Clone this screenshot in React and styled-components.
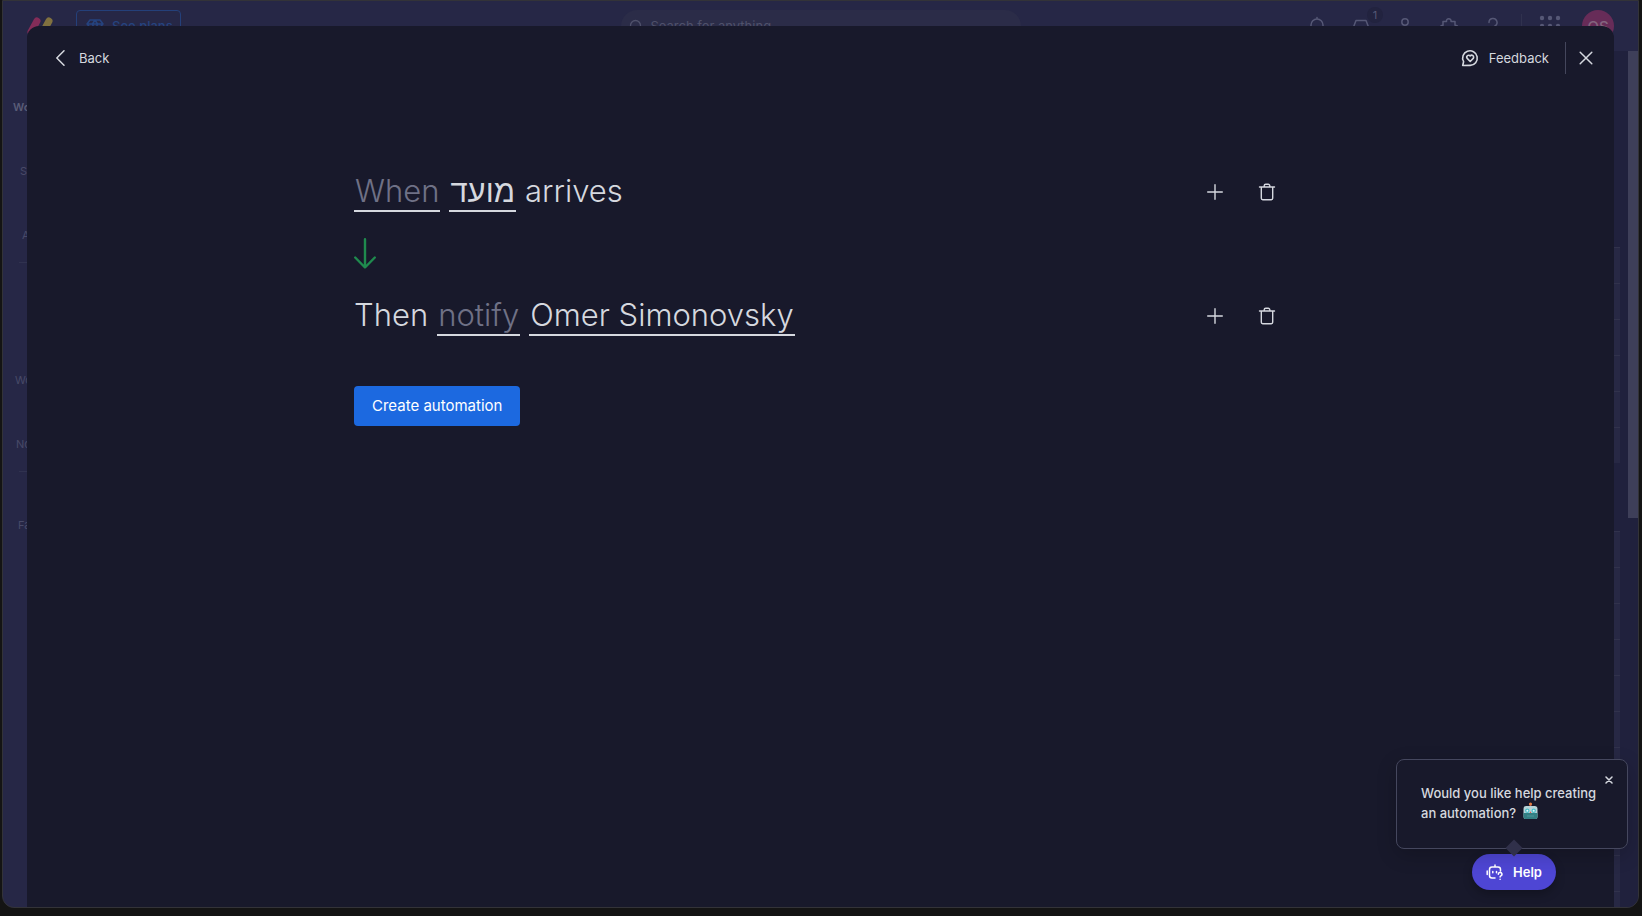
import React from "react";
import styled, { createGlobalStyle } from "styled-components";

const Global = createGlobalStyle`
  *, *::before, *::after { box-sizing: border-box; }
  html, body, #root { height: 100%; }
  body {
    margin: 0;
    background: #141414;
    font-family: Inter, "Liberation Sans", sans-serif;
    font-size: 13px;
    color: #d5d8df;
    overflow: hidden;
  }
  button { font: inherit; color: inherit; cursor: pointer; }
`;

const Desktop = styled.div`
  height: 100%;
  padding: 0 3px 8px 2px;
`;

const Window = styled.div`
  position: relative;
  display: flex;
  flex-direction: column;
  height: 100%;
  overflow: hidden;
  border: 1px solid #333338;
  border-radius: 0 0 12px 12px;
  background: #262746;
`;

const TopBar = styled.header`
  display: grid;
  grid-template-columns: 1fr 400px 1fr;
  align-items: center;
  flex: none;
  height: 50px;
  padding: 0 24px;
  color: #565876;
`;

const TopLeft = styled.div`
  display: flex;
  align-items: center;
  gap: 23px;
`;

const PlansButton = styled.button`
  display: flex;
  align-items: center;
  gap: 8px;
  height: 32px;
  padding: 0 7px 0 9px;
  border: 1px solid #24407a;
  border-radius: 4px;
  background: none;
  color: #25437f;
  font-size: 13px;
  font-weight: 500;
`;

const SearchBox = styled.label`
  display: flex;
  align-items: center;
  gap: 6px;
  height: 32px;
  padding: 0 8px;
  border-radius: 16px;
  background: #2b2c48;
  color: #4f516b;
`;

const SearchInput = styled.input`
  flex: 1;
  min-width: 0;
  border: 0;
  background: none;
  font: inherit;
  color: inherit;
  outline: none;
  &::placeholder { color: #4f516b; opacity: 1; }
`;

const TopRight = styled.div`
  display: flex;
  align-items: center;
  justify-content: flex-end;
  gap: 20px;
`;

const TopIcon = styled.button`
  position: relative;
  display: grid;
  place-items: center;
  width: 24px;
  height: 24px;
  padding: 0;
  border: 0;
  background: none;
`;

const Badge = styled.span`
  position: absolute;
  top: -7px;
  right: -10px;
  width: 16px;
  height: 16px;
  border-radius: 8px;
  background: #22233f;
  font-size: 11px;
  line-height: 16px;
`;

const TopDivider = styled.span`
  width: 1px;
  height: 24px;
  margin: 0 -4px;
  background: #30324e;
`;

const Avatar = styled.button`
  width: 32px;
  height: 32px;
  padding: 0;
  border: 0;
  border-radius: 50%;
  background: #672c58;
  color: #83657f;
  font-size: 15px;
  font-weight: 500;
`;

const Workspace = styled.div`
  display: flex;
  flex: 1;
  min-height: 0;
`;

const Sidebar = styled.nav`
  flex: none;
  width: 48px;
  padding-top: 24px;
  color: #484a68;
  font-size: 11px;
`;

const SideItem = styled.div`
  height: 64px;
  padding-left: ${(p) => p.$indent}px;
  line-height: 64px;
  font-weight: ${(p) => (p.$active ? 600 : 400)};
  color: ${(p) => (p.$active ? "#5a5c77" : "inherit")};
`;

const SideRule = styled.hr`
  height: 1px;
  margin: ${(p) => p.$space}px 0 ${(p) => p.$after}px 16px;
  border: 0;
  background: #30324f;
`;

const Board = styled.main`
  flex: 1;
  padding: 196px 8px 0 0;
  background: #20213d;
`;

const BoardGroup = styled.div`
  margin-bottom: 68px;
  background: #272844;
`;

const BoardRow = styled.div`
  height: 36px;
  border-top: 1px solid #31324c;
`;

const ScrollTrack = styled.div`
  flex: none;
  width: 10px;
  background: #20213d;
`;

const ScrollThumb = styled.div`
  height: 467px;
  background: #3e3f59;
`;

const Modal = styled.section`
  position: absolute;
  inset: 25px 24px 0;
  border-radius: 12px 12px 0 0;
  background: #18192b;
`;

const ModalHeader = styled.header`
  display: flex;
  align-items: center;
  justify-content: space-between;
  padding: 16px 16px 0 24px;
`;

const HeaderGroup = styled.div`
  display: flex;
  align-items: center;
  gap: 4px;
`;

const TextButton = styled.button`
  display: flex;
  align-items: center;
  gap: ${(p) => (p.$back ? 11 : 10)}px;
  height: 32px;
  padding: ${(p) => (p.$back ? "0 4px 0 1px" : "0 12px 0 4px")};
  border: 0;
  background: none;
`;

const CloseButton = styled.button`
  display: grid;
  place-items: center;
  width: 24px;
  height: 32px;
  margin-left: 4px;
  padding: 0;
  border: 0;
  background: none;
`;

const HeaderDivider = styled.span`
  width: 1px;
  height: 32px;
  background: #44465c;
`;

const Editor = styled.div`
  display: flex;
  flex-direction: column;
  align-items: flex-start;
  max-width: 933px;
  margin: 94px auto 0;
`;

const SentenceRow = styled.div`
  display: flex;
  align-items: center;
  justify-content: space-between;
  width: 100%;
  height: 48px;
`;

const Sentence = styled.div`
  display: flex;
  align-items: flex-start;
  gap: 9px;
  font-size: 31px;
  font-weight: 300;
  line-height: 38px;
`;

const Field = styled.button`
  padding: 0 1px;
  border: 0;
  border-bottom: 2px solid #d5d8df;
  background: none;
  line-height: 38px;
  color: ${(p) => (p.$muted ? "#6f7186" : "#d5d8df")};
`;

const RowActions = styled.div`
  display: flex;
  gap: 12px;
`;

const IconButton = styled.button`
  display: grid;
  place-items: center;
  width: 40px;
  height: 40px;
  padding: 0;
  border: 0;
  background: none;
`;

const ArrowSlot = styled.div`
  height: 76px;
  padding-top: 22px;
  color: #1f8a4e;
`;

const CreateButton = styled.button`
  height: 40px;
  margin-top: 46px;
  padding: 0 18px 1px;
  border: 0;
  border-radius: 4px;
  background: #1c69e0;
  color: #ffffff;
  font-size: 15px;
`;

const HelpArea = styled.aside`
  position: absolute;
  right: 10px;
  bottom: 17px;
  display: flex;
  flex-direction: column;
  align-items: center;
  gap: 5px;
  width: 232px;
`;

const HelpCard = styled.div`
  position: relative;
  width: 100%;
  height: 90px;
  padding: 23px 24px;
  border: 1px solid #45475e;
  border-radius: 8px;
  background: #18192b;
  box-shadow: 0 6px 20px rgba(0, 0, 0, 0.2);
  &::after {
    content: "";
    position: absolute;
    left: calc(50% - 4px);
    bottom: -6px;
    width: 12px;
    height: 12px;
    background: #30304a;
    transform: rotate(45deg);
  }
`;

const HelpText = styled.p`
  margin: 0;
  white-space: nowrap;
  font-weight: 500;
  line-height: 20px;
  svg { margin: -2px 0 0 2px; vertical-align: -2px; }
`;

const HelpClose = styled.button`
  position: absolute;
  top: 12px;
  right: 10px;
  display: grid;
  place-items: center;
  width: 16px;
  height: 16px;
  padding: 0;
  border: 0;
  background: none;
`;

const HelpButton = styled.button`
  display: flex;
  align-items: center;
  justify-content: center;
  gap: 9px;
  width: 84px;
  height: 36px;
  padding: 0 0 1px;
  border: 0;
  border-radius: 18px;
  background: #4e46d4;
  color: #ffffff;
  font-size: 13px;
  font-weight: 600;
  box-shadow: 0 4px 10px rgba(0, 0, 0, 0.25);
`;

const HelpButtonSlot = styled.div`
  padding-left: 4px;
`;

const Icon = ({ w = 20, h = w, sw = 1.5, children, ...rest }) => (
  <svg width={w} height={h} viewBox={`0 0 ${w} ${h}`} fill="none" stroke="currentColor"
    strokeWidth={sw} strokeLinecap="round" strokeLinejoin="round" aria-hidden="true" {...rest}>
    {children}
  </svg>
);

const Logo = () => (
  <Icon w={26} h={22} sw={7}>
    <path d="M4 17 10 6" stroke="#832c58" />
    <path d="M16 17 22 6" stroke="#80713f" />
  </Icon>
);

const Trash = () => (
  <Icon w={18} sw={1.4}>
    <path d="M1.500 4h15M3.300 4v11.300a1.400 1.400 0 0 0 1.400 1.400h8.600a1.400 1.400 0 0 0 1.400-1.400V4M6.200 4V2.800A1.600 1.600 0 0 1 7.800 1.200h2.400a1.600 1.600 0 0 1 1.600 1.600V4" />
  </Icon>
);

const Robot = () => (
  <svg width="17" height="18" viewBox="0 0 17 18" aria-hidden="true">
    <rect x="7.7" y="1" width="1.600" height="4" fill="#a3554a" />
    <circle cx="8.500" cy="2" r="1.600" fill="#e07a45" />
    <path d="M4.500 4h8a3 3 0 0 1 3 3v8a2 2 0 0 1-2 2h-10a2 2 0 0 1-2-2V7a3 3 0 0 1 3-3Z" fill="#b8d4d8" />
    <path d="M1.500 11h14v4a2 2 0 0 1-2 2h-10a2 2 0 0 1-2-2Z" fill="#347f83" />
    <circle cx="5.300" cy="8.700" r="2.200" fill="#4bbfc9" />
    <circle cx="11.700" cy="8.700" r="2.200" fill="#4bbfc9" />
    <circle cx="5.300" cy="8.700" r="1" fill="#e5f6f7" />
    <circle cx="11.700" cy="8.700" r="1" fill="#e5f6f7" />
    <path d="m8.500 9.300.9 1.700H7.600Z" fill="#d9534a" />
    <path d="M5 14h7" stroke="#4f989b" strokeWidth="1.200" />
  </svg>
);

const Actions = () => (
  <RowActions>
    <IconButton aria-label="Add">
      <Icon w={16} sw={1.4}><path d="M8 .7v14.600M.7 8h14.600" /></Icon>
    </IconButton>
    <IconButton aria-label="Delete"><Trash /></IconButton>
  </RowActions>
);

const rows = (n) => Array.from({ length: n }, (_, i) => <BoardRow key={i} />);

export default function App() {
  return (
    <Desktop>
      <Global />
      <Window>
        <TopBar>
          <TopLeft>
            <Logo />
            <PlansButton>
              <Icon w={18} h={16}><path d="M4 2h10l3 4-8 9-8-9ZM1 6h16M6.500 6 9 14l2.500-8M6.500 6 9 2l2.500 4" /></Icon>
              See plans
            </PlansButton>
          </TopLeft>
          <SearchBox>
            <Icon w={14} sw={1.3}><circle cx="6.500" cy="6.500" r="5" /><path d="m10.500 10.500 3 3" /></Icon>
            <SearchInput placeholder="Search for anything..." aria-label="Search" />
          </SearchBox>
          <TopRight>
            <TopIcon aria-label="Notifications"><Icon><path d="M4 15V9a6 6 0 0 1 12 0v6l1.500 1h-15ZM10 1.500V3M8.500 18h3" /></Icon></TopIcon>
            <TopIcon aria-label="Inbox">
              <Icon><path d="M2.500 11 5 4.500h10l2.500 6.500v6h-15ZM2.500 11h4l1 2h5l1-2h4" /></Icon>
              <Badge>1</Badge>
            </TopIcon>
            <TopIcon aria-label="Invite"><Icon><circle cx="10" cy="6" r="3.200" /><path d="M4 18v-2a4 4 0 0 1 4-4h4a4 4 0 0 1 4 4v2" /></Icon></TopIcon>
            <TopIcon aria-label="Apps"><Icon><path d="M4 5.500h3.500a2.300 2.300 0 1 1 4.500 0H16v3.700a2.300 2.300 0 1 1 0 4.500V18H4v-4.200a2.300 2.300 0 1 1 0-4.500Z" /></Icon></TopIcon>
            <TopIcon aria-label="Help center"><Icon><path d="M6 6.500a4 4 0 1 1 6 3.400c-1.300.8-2 1.500-2 3.100M10 17v.1" /></Icon></TopIcon>
            <TopDivider />
            <TopIcon aria-label="Products">
              <Icon w={22} fill="currentColor" stroke="none">
                {[3, 11, 19].map((y) => [3, 11, 19].map((x) => <circle key={`${x}-${y}`} cx={x} cy={y} r="2.200" />))}
              </Icon>
            </TopIcon>
            <Avatar>OS</Avatar>
          </TopRight>
        </TopBar>
        <Workspace>
          <Sidebar>
            <SideItem $indent={10} $active>Wo</SideItem>
            <SideItem $indent={17}>S</SideItem>
            <SideItem $indent={19}>A</SideItem>
            <SideRule $space={-5} $after={85} />
            <SideItem $indent={12}>Wo</SideItem>
            <SideItem $indent={13}>No</SideItem>
            <SideRule $space={-5} $after={21} />
            <SideItem $indent={15}>Fa</SideItem>
          </Sidebar>
          <Board>
            <BoardGroup>{rows(6)}</BoardGroup>
            <BoardGroup>{rows(14)}</BoardGroup>
          </Board>
          <ScrollTrack><ScrollThumb /></ScrollTrack>
        </Workspace>

        <Modal role="dialog" aria-label="Automation builder">
          <ModalHeader>
            <TextButton $back>
              <Icon w={16}><path d="M12 .8 4.800 8l7.200 7.200" /></Icon>
              Back
            </TextButton>
            <HeaderGroup>
              <TextButton>
                <Icon w={18} sw={1.6}>
                  <path d="M2.600 12.700A7.300 7.300 0 1 1 9.200 16.400L1.700 16.500Z" />
                  <path d="M9.200 12.500 6.200 9.400a1.800 1.800 0 0 1 3-2.400 1.800 1.800 0 0 1 3 2.400Z" />
                </Icon>
                Feedback
              </TextButton>
              <HeaderDivider />
              <CloseButton aria-label="Close">
                <Icon w={14}><path d="m1.200 1.200 11.600 11.600M12.800 1.200 1.200 12.800" /></Icon>
              </CloseButton>
            </HeaderGroup>
          </ModalHeader>

          <Editor>
            <SentenceRow>
              <Sentence>
                <Field $muted>When</Field>
                <Field lang="he">מועד</Field>
                <span>arrives</span>
              </Sentence>
              <Actions />
            </SentenceRow>
            <ArrowSlot>
              <Icon w={22} h={31} sw={2.4}>
                <path d="M11 1.200v28M1.200 19.500l9.800 10 9.800-10" />
              </Icon>
            </ArrowSlot>
            <SentenceRow>
              <Sentence>
                <span>Then</span>
                <Field $muted>notify</Field>
                <Field>Omer Simonovsky</Field>
              </Sentence>
              <Actions />
            </SentenceRow>
            <CreateButton>Create automation</CreateButton>
          </Editor>
        </Modal>

        <HelpArea>
          <HelpCard>
            <HelpText>
              Would you like help creating<br />an automation? <Robot />
            </HelpText>
            <HelpClose aria-label="Dismiss">
              <Icon w={8}><path d="m1 1 6 6M7 1 1 7" /></Icon>
            </HelpClose>
          </HelpCard>
          <HelpButtonSlot>
            <HelpButton>
              <Icon w={18} h={16} sw={1.5}>
                <path d="M9 14H6a2.500 2.500 0 0 1-2.500-2.500V5.500A2.500 2.500 0 0 1 6 3h6a2.500 2.500 0 0 1 2.500 2.500V7M9 3V1M1.200 7v3.500M6.800 7.500v1.200M10.500 7.500v1.200" />
                <path d="M12.300 10.300a1.800 1.800 0 1 1 2.600 1.500c-.6.300-.8.600-.8 1.100M14.100 15.200v.1" />
              </Icon>
              Help
            </HelpButton>
          </HelpButtonSlot>
        </HelpArea>
      </Window>
    </Desktop>
  );
}
